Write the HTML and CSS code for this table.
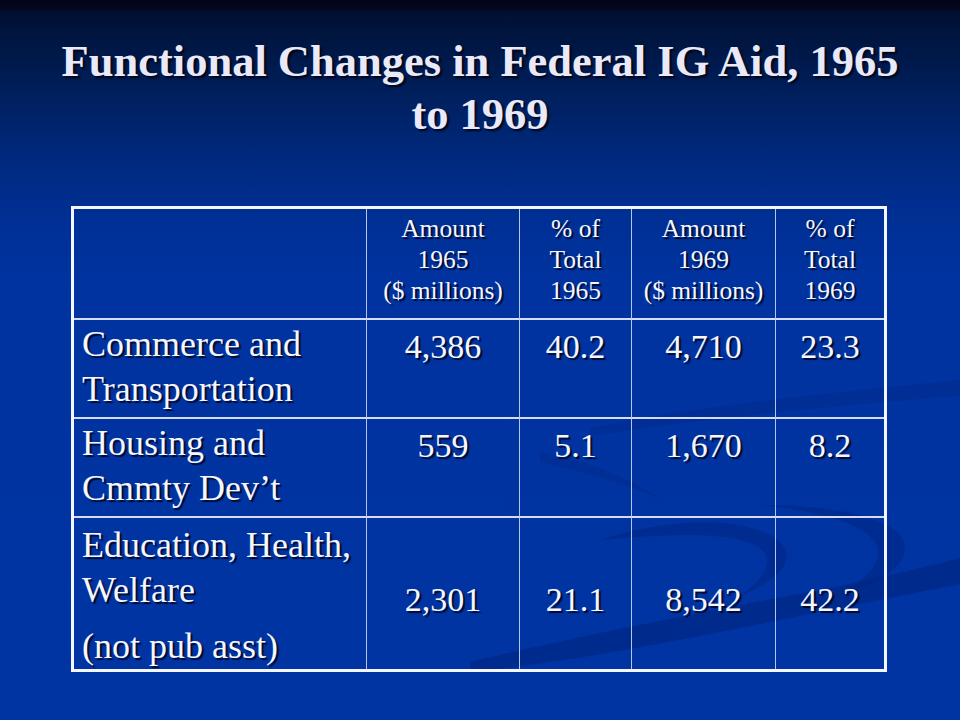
FILE: index.html
```html
<!DOCTYPE html>
<html lang="en">
<head>
<meta charset="utf-8">
<title>Functional Changes in Federal IG Aid, 1965 to 1969</title>
<link rel="stylesheet" href="styles.css">
</head>
<body>
<div class="slide">
  <svg class="swirl" viewBox="0 0 960 720" width="960" height="720" aria-hidden="true">
    <path class="band" d="M470 662 C 560 640, 700 612, 820 590 C 880 578, 930 566, 960 558 L 960 584 C 900 596, 820 612, 720 632 C 620 652, 540 665, 470 672 Z"/>
    <path class="band soft" d="M600 540 C 660 520, 730 515, 770 535 C 800 552, 790 575, 740 596 C 770 575, 775 555, 755 545 C 720 530, 660 535, 600 540 Z"/>
    <path class="band soft" d="M760 505 C 840 505, 905 520, 905 548 C 905 570, 870 588, 830 598 C 860 585, 880 568, 878 550 C 875 528, 830 512, 760 505 Z"/>
    <path class="band faint" d="M590 428 C 700 405, 840 392, 960 380 L 960 396 C 840 405, 710 418, 590 436 Z"/>
    <path class="band faint" d="M540 452 C 590 462, 630 478, 660 498 C 625 485, 585 472, 540 462 Z"/>
  </svg>
  <header class="title">
    <h1>Functional Changes in Federal IG Aid, 1965<br>to 1969</h1>
  </header>
  <table class="grid">
    <colgroup>
      <col class="c-label">
      <col class="c-amt65">
      <col class="c-pct65">
      <col class="c-amt69">
      <col class="c-pct69">
    </colgroup>
    <thead>
      <tr class="r-head">
        <th class="blank"></th>
        <th>Amount 1965<br>($ millions)</th>
        <th>% of Total 1965</th>
        <th>Amount 1969<br>($ millions)</th>
        <th class="last">% of Total 1969</th>
      </tr>
    </thead>
    <tbody>
      <tr class="r-body">
        <td class="label">Commerce and Transportation</td>
        <td class="num">4,386</td>
        <td class="num">40.2</td>
        <td class="num">4,710</td>
        <td class="num last">23.3</td>
      </tr>
      <tr class="r-body">
        <td class="label">Housing and Cmmty Dev’t</td>
        <td class="num">559</td>
        <td class="num">5.1</td>
        <td class="num">1,670</td>
        <td class="num last">8.2</td>
      </tr>
      <tr class="r-tall">
        <td class="label tall"><p>Education, Health, Welfare</p><p>(not pub asst)</p></td>
        <td class="num mid">2,301</td>
        <td class="num mid">21.1</td>
        <td class="num mid">8,542</td>
        <td class="num mid last">42.2</td>
      </tr>
    </tbody>
  </table>
</div>
</body>
</html>
```

FILE: styles.css
```css
* { box-sizing: border-box; }

html, body {
  margin: 0;
  padding: 0;
}

body {
  width: 960px;
  height: 720px;
  overflow: hidden;
  font-family: "Liberation Serif", "Times New Roman", serif;
}

.slide {
  position: relative;
  width: 960px;
  height: 720px;
  display: flex;
  flex-direction: column;
  align-items: flex-start;
  background: linear-gradient(to bottom,
    #03041a 0px,
    #04071e 9px,
    #010f33 12px,
    #001641 40px,
    #001e5a 90px,
    #00287a 150px,
    #002f92 210px,
    #0033a0 280px,
    #0034a2 720px);
}

.swirl {
  position: absolute;
  left: 0;
  top: 0;
  z-index: 0;
}

.band {
  fill: #00247e;
  opacity: 0.55;
}
.band.soft { opacity: 0.45; }
.band.faint { opacity: 0.3; }

.title {
  position: relative;
  z-index: 1;
  width: 960px;
  padding-top: 35px;
}

.title h1 {
  margin: 0;
  text-align: center;
  font-size: 44.5px;
  line-height: 53px;
  font-weight: bold;
  color: #e9e9f9;
  text-shadow: 2px 2px 2px rgba(0, 0, 10, 0.85);
}

.grid {
  position: relative;
  z-index: 1;
  margin: 65px 0 0 71px;
  width: 816px;
  table-layout: fixed;
  border-collapse: separate;
  border-spacing: 0;
  border: 3px solid #f4f6ff;
  color: #f6f6ff;
  text-shadow: 2px 2px 1px rgba(0, 0, 20, 0.8);
}

.c-label { width: 293px; }
.c-amt65 { width: 153px; }
.c-pct65 { width: 112px; }
.c-amt69 { width: 144px; }
.c-pct69 { width: 108px; }

.grid th,
.grid td {
  padding: 0;
  border-right: 1px solid #b9c4ee;
  border-bottom: 2px solid #d6dcf6;
  vertical-align: top;
}

.grid .last { border-right: none; }
.grid .r-tall td { border-bottom: none; }

.r-head { height: 111px; }
.r-body { height: 99px; }
.r-tall { height: 148px; }

.grid th {
  font-weight: normal;
  font-size: 25.5px;
  line-height: 31px;
  text-align: center;
  padding: 4px 6px 0;
}

.grid td.label {
  font-size: 36px;
  line-height: 45px;
  text-align: left;
  padding: 2px 6px 0 8px;
}

.grid td.label.tall { padding-top: 5px; }

.label p { margin: 0; }
.label p + p { margin-top: 11px; }

.grid td.num {
  font-size: 34px;
  line-height: 45px;
  text-align: center;
  padding-top: 4px;
}

.grid td.num.mid { padding-top: 59px; }
```
